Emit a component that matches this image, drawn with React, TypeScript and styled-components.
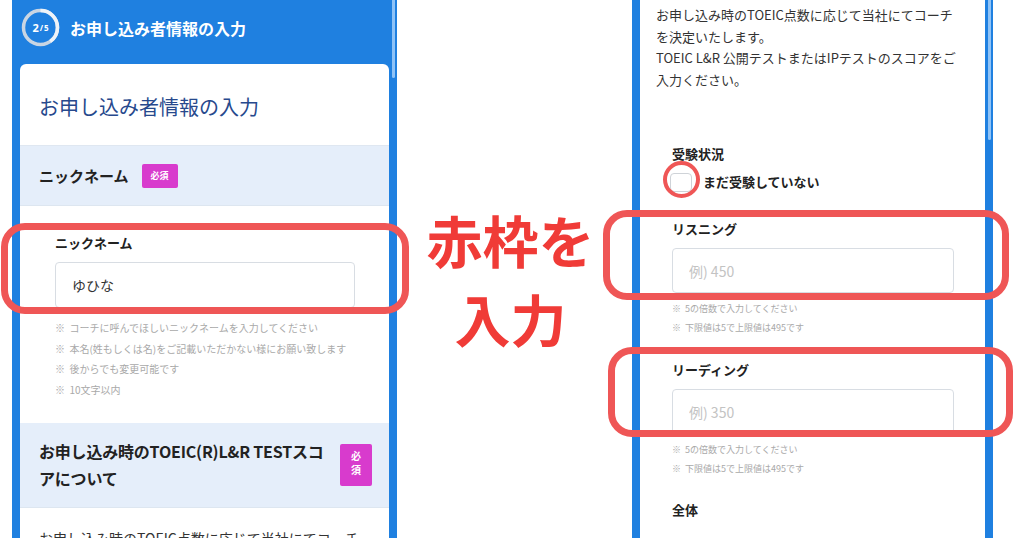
import styled, { createGlobalStyle } from "styled-components";

const GlobalStyle = createGlobalStyle`
  * { box-sizing: border-box; }
  body {
    margin: 0;
    font-family: "Noto Sans CJK JP", "Noto Sans", sans-serif;
    background: #fff;
    overflow: hidden;
  }
`;

const Canvas = styled.div`
  display: flex;
  width: 1024px;
  height: 538px;
  overflow: hidden;
  background: #fff;
`;

const Phone = styled.div<{ $width: number; $ml: number; $mr: number }>`
  position: relative;
  width: ${(p) => p.$width}px;
  margin-left: ${(p) => p.$ml}px;
  margin-right: ${(p) => p.$mr}px;
  flex-shrink: 0;
  height: 538px;
  padding: 0 8px;
  background: #1f80e0;
  display: flex;
  flex-direction: column;
`;

const Thumb = styled.div<{ $h: number }>`
  position: absolute;
  top: 0;
  right: 2px;
  width: 3px;
  height: ${(p) => p.$h}px;
  border-radius: 0 0 2px 2px;
  background: #8fc3f7;
`;

const Header = styled.div`
  flex-shrink: 0;
  height: 55px;
  display: flex;
  align-items: center;
  gap: 10px;
  padding-left: 1px;
  color: #fff;
  font-size: 16px;
  font-weight: 700;
`;

const Step = styled.div`
  position: relative;
  width: 39px;
  height: 39px;
  display: flex;
  align-items: center;
  justify-content: center;
  font-family: "Noto Sans", sans-serif;
  font-weight: 700;
  font-size: 11px;
  svg {
    position: absolute;
    inset: 0;
  }
  small {
    font-size: 8px;
    margin-left: 1px;
  }
`;

const Card = styled.div`
  margin-top: 9px;
  flex: 1;
  min-height: 0;
  background: #fff;
  border-radius: 6px 6px 0 0;
`;

const CardTitle = styled.h1`
  margin: 0;
  height: 82px;
  padding: 4px 19px 0;
  display: flex;
  align-items: center;
  font-size: 20px;
  font-weight: 400;
  color: #27498d;
  border-bottom: 1px solid #dfe7f1;
`;

const SectionHead = styled.div<{ $h: number }>`
  height: ${(p) => p.$h}px;
  padding: 0 17px 0 19px;
  display: flex;
  align-items: center;
  gap: 13px;
  background: #e5eefa;
  border-bottom: 1px solid #dde6f0;
`;

const SectionTitle = styled.h2<{ $grow?: boolean }>`
  margin: 0;
  font-size: ${(p) => (p.$grow ? 16 : 15)}px;
  line-height: 27px;
  font-weight: 700;
  color: #222;
  white-space: nowrap;
  ${(p) => (p.$grow ? "flex: 1; letter-spacing: -0.2px;" : "")}
`;

const Badge = styled.span<{ $tall?: boolean }>`
  display: flex;
  align-items: center;
  justify-content: center;
  flex-shrink: 0;
  width: ${(p) => (p.$tall ? 32 : 36)}px;
  height: ${(p) => (p.$tall ? 42 : 24)}px;
  border-radius: 2px;
  background: #d83bcd;
  color: #fff;
  font-size: 9px;
  font-weight: 700;
  line-height: 15px;
  text-align: center;
  ${(p) => (p.$tall ? "writing-mode: vertical-rl; font-size: 10px; letter-spacing: 4px;" : "")}
`;

const Body = styled.p`
  margin: 0;
  padding: 18px 19px 0;
  font-size: 14px;
  line-height: 24px;
  color: #333;
  white-space: nowrap;
`;

const FieldBlock = styled.div<{ $wide?: boolean; $mt?: number }>`
  position: relative;
  margin-top: ${(p) => p.$mt ?? 0}px;
  padding: ${(p) => (p.$wide ? "27px 34px 23px 35px" : "0 31px 0 32px")};
`;

const Label = styled.div`
  font-size: 13px;
  line-height: 20px;
  font-weight: 700;
  color: #222;
`;

const TextInput = styled.input<{ $wide?: boolean }>`
  display: block;
  width: 100%;
  height: ${(p) => (p.$wide ? 46 : 45)}px;
  margin-top: 9px;
  padding: 0 16px;
  border: 1px solid #d8dde3;
  border-radius: 4px;
  background: #fff;
  font-family: "Noto Sans CJK JP", sans-serif;
  font-size: 14px;
  color: #333;
  outline: none;
  &::placeholder {
    color: #c3c3c3;
  }
`;

const Notes = styled.ul<{ $wide?: boolean }>`
  list-style: none;
  margin: ${(p) => (p.$wide ? 10 : 6)}px 0 0;
  padding: 0;
  font-size: ${(p) => (p.$wide ? 10 : 9)}px;
  line-height: ${(p) => (p.$wide ? 20.5 : 19)}px;
  color: #a9a9a9;
  white-space: nowrap;
`;

const Frame = styled.div<{ $l: number; $t: number; $w: number; $h: number }>`
  position: absolute;
  left: ${(p) => p.$l}px;
  top: ${(p) => p.$t}px;
  width: ${(p) => p.$w}px;
  height: ${(p) => p.$h}px;
  border: 7px solid #ef5656;
  border-radius: 24px;
  pointer-events: none;
  z-index: 2;
`;

const Middle = styled.div`
  flex: 1;
  display: flex;
  flex-direction: column;
  align-items: center;
  padding: 199px 8px 0 0;
  color: #f03b37;
  font-size: 56px;
  font-weight: 700;
  line-height: 79px;
  white-space: nowrap;
`;

const Screen = styled.div`
  flex: 1;
  background: #fff;
`;

const Intro = styled.p`
  margin: 0;
  padding: 4px 16px 0;
  font-size: 13px;
  line-height: 21.5px;
  color: #333;
  white-space: nowrap;
`;

const Status = styled.div`
  margin-top: 54px;
  padding-left: 32px;
`;

const CheckRow = styled.label`
  display: flex;
  align-items: center;
  gap: 11px;
  margin-top: 7px;
  margin-left: -2px;
  font-size: 13px;
  line-height: 22px;
  font-weight: 700;
  color: #222;
`;

const Box = styled.span`
  position: relative;
  width: 22px;
  height: 19px;
  border: 1px solid #cfd3d8;
  border-radius: 4px;
  background: #fff;
`;

const Ring = styled.span`
  position: absolute;
  left: -8px;
  top: -13px;
  width: 37px;
  height: 37px;
  border: 4px solid #ef5656;
  border-radius: 50%;
`;

type FieldProps = {
  label: string;
  value?: string;
  placeholder?: string;
  notes: string[];
  wide?: boolean;
  mt?: number;
  frame: [number, number, number, number];
};

function Field({ label, value, placeholder, notes, wide, mt, frame }: FieldProps) {
  return (
    <FieldBlock $wide={wide} $mt={mt}>
      <Label>{label}</Label>
      <TextInput $wide={wide} readOnly value={value} placeholder={placeholder} />
      <Notes $wide={wide}>
        {notes.map((n) => (
          <li key={n}>※&nbsp;&nbsp;{n}</li>
        ))}
      </Notes>
      <Frame $l={frame[0]} $t={frame[1]} $w={frame[2]} $h={frame[3]} />
    </FieldBlock>
  );
}

const scoreNotes = ["5の倍数で入力してください", "下限値は5で上限値は495です"];

export default function App() {
  return (
    <>
      <GlobalStyle />
      <Canvas>
        <Phone $width={385} $ml={12} $mr={0}>
          <Thumb $h={78} />
          <Header>
            <Step>
              <svg width="39" height="39" viewBox="0 0 39 39">
                <circle cx="19.5" cy="19.5" r="17" fill="none" stroke="#c9d5e3" strokeWidth="3.5" />
                <circle
                  cx="19.5"
                  cy="19.5"
                  r="17"
                  fill="none"
                  stroke="#eef3f9"
                  strokeWidth="3.5"
                  strokeDasharray="42.7 200"
                  transform="rotate(-90 19.5 19.5)"
                />
              </svg>
              2<small>/</small>
              <small>5</small>
            </Step>
            お申し込み者情報の入力
          </Header>
          <Card>
            <CardTitle>お申し込み者情報の入力</CardTitle>
            <SectionHead $h={60}>
              <SectionTitle>ニックネーム</SectionTitle>
              <Badge>必須</Badge>
            </SectionHead>
            <Field
              wide
              label="ニックネーム"
              value="ゆひな"
              notes={[
                "コーチに呼んでほしいニックネームを入力してください",
                "本名(姓もしくは名)をご記載いただかない様にお願い致します",
                "後からでも変更可能です",
                "10文字以内",
              ]}
              frame={[-19, 17, 408, 91]}
            />
            <SectionHead $h={85}>
              <SectionTitle $grow>
                お申し込み時のTOEIC(R)L&amp;R TESTスコ
                <br />
                アについて
              </SectionTitle>
              <Badge $tall>必須</Badge>
            </SectionHead>
            <Body>お申し込み時のTOEIC点数に応じて当社にてコーチ</Body>
          </Card>
        </Phone>

        <Middle>
          <span>赤枠を</span>
          <span>入力</span>
        </Middle>

        <Phone $width={361} $ml={0} $mr={31}>
          <Thumb $h={140} />
          <Screen>
            <Intro>
              お申し込み時のTOEIC点数に応じて当社にてコーチ
              <br />
              を決定いたします。
              <br />
              TOEIC L&amp;R 公開テストまたはIPテストのスコアをご
              <br />
              入力ください。
            </Intro>
            <Status>
              <Label>受験状況</Label>
              <CheckRow>
                <Box>
                  <Ring />
                </Box>
                まだ受験していない
              </CheckRow>
            </Status>
            <Field
              mt={26}
              label="リスニング"
              placeholder="例) 450"
              notes={scoreNotes}
              frame={[-37, -9, 406, 90]}
            />
            <Field
              mt={23}
              label="リーディング"
              placeholder="例) 350"
              notes={scoreNotes}
              frame={[-32, -13, 405, 90]}
            />
            <FieldBlock $mt={22}>
              <Label>全体</Label>
            </FieldBlock>
          </Screen>
        </Phone>
      </Canvas>
    </>
  );
}
